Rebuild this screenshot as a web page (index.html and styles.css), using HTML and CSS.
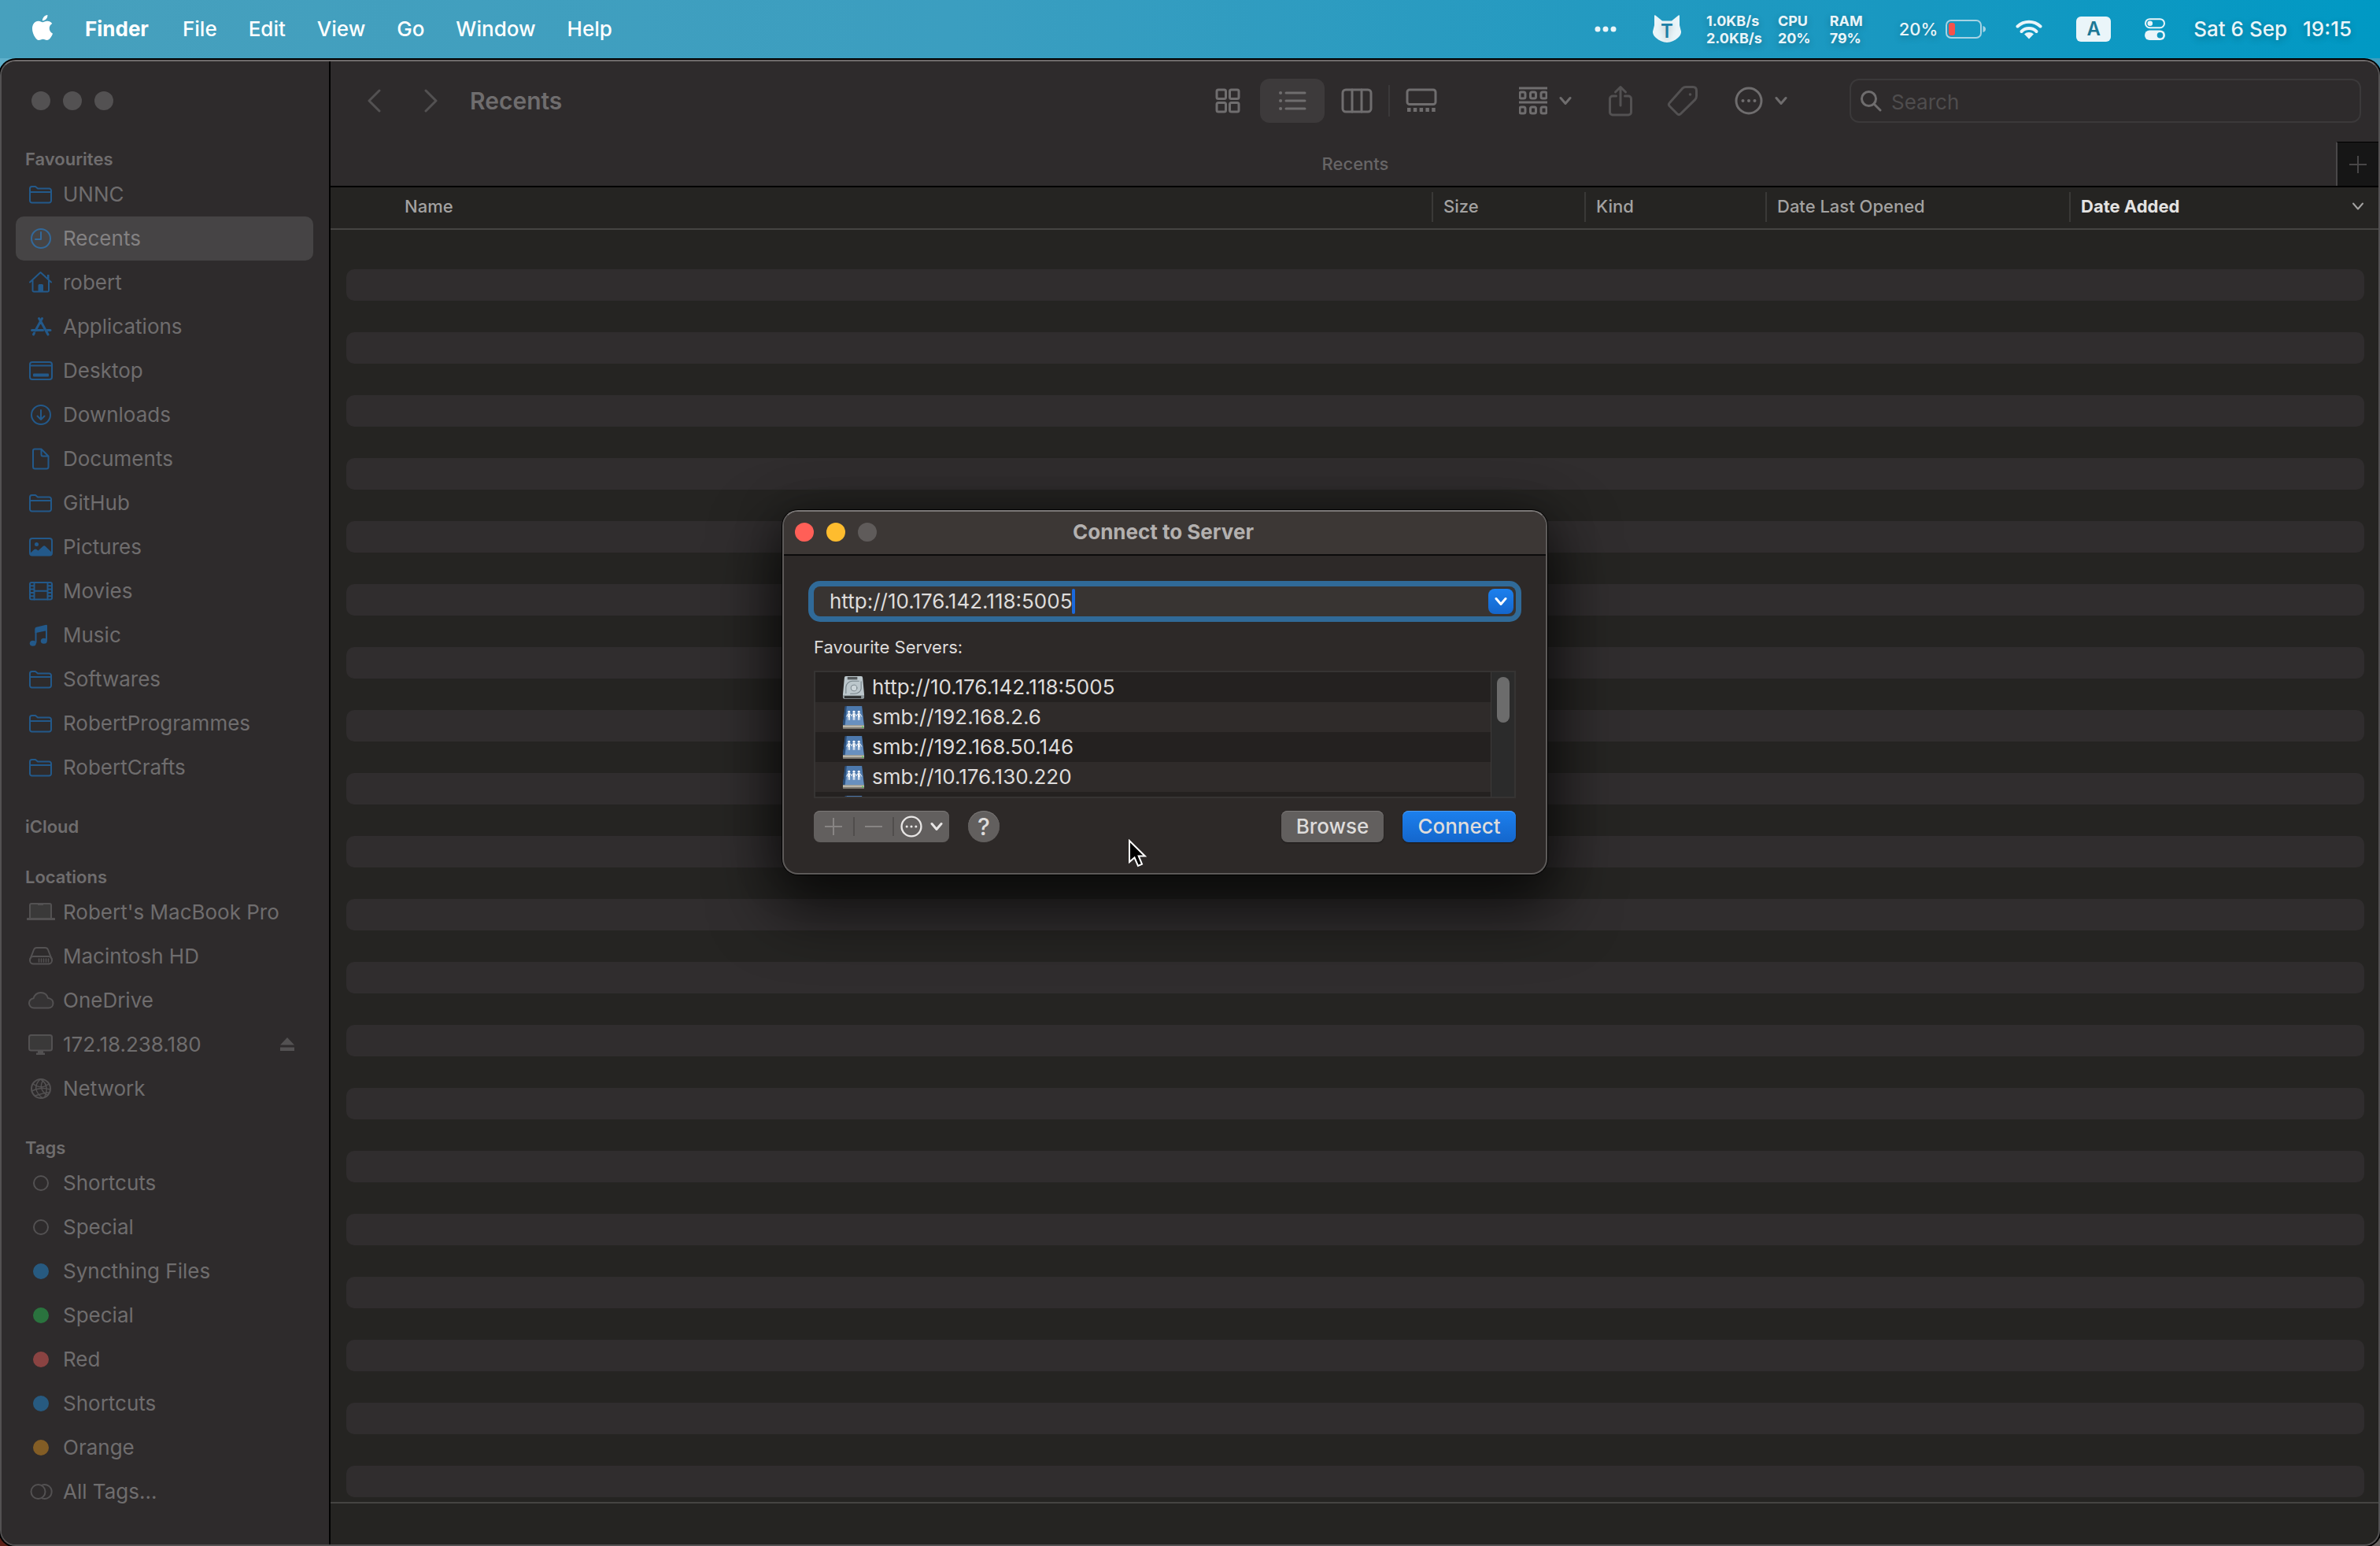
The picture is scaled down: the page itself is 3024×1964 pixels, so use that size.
FILE: index.html
```html
<!DOCTYPE html>
<html lang="en-GB">
<head>
<meta charset="utf-8">
<title>Finder</title>
<link rel="stylesheet" href="styles.css">
</head>
<body>
<svg class="sprite" aria-hidden="true">
  <symbol id="i-folder" viewBox="0 0 36 36"><path d="M4 10.500a2.500 2.500 0 0 1 2.500-2.500h4.500l3 2.500h14.500a2.500 2.500 0 0 1 2.500 2.500v13a2.500 2.500 0 0 1-2.500 2.500h-22a2.500 2.500 0 0 1-2.500-2.500zM4 15h27"/></symbol>
  <symbol id="i-clock" viewBox="0 0 36 36"><circle cx="18" cy="18" r="12"/><path d="M18 10v9h-7"/></symbol>
  <symbol id="i-home" viewBox="0 0 36 36"><path d="M4 17.500 17.500 5 31 17.500M7.500 15.500V28a1.500 1.500 0 0 0 1.500 1.500h17.500a1.500 1.500 0 0 0 1.500-1.500V15.500"/><path class="fill" d="M14.500 29v-7.500a1.500 1.500 0 0 1 1.500-1.500h3.500a1.500 1.500 0 0 1 1.500 1.500V29zM26 8h2.500v6L26 12z"/></symbol>
  <symbol id="i-apps" viewBox="0 0 36 36"><path class="thick" d="M19.500 7.500 11 23M15.500 7.500l3 5 8.500 15.500M6.500 22.500h14M26 22.500h4M9.500 26l-1 2"/></symbol>
  <symbol id="i-desktop" viewBox="0 0 36 36"><rect x="4" y="7" width="28" height="22" rx="3"/><path d="M4 11.500h28"/><rect class="fill" x="8" y="21.500" width="20" height="4" rx="1"/></symbol>
  <symbol id="i-download" viewBox="0 0 36 36"><circle cx="18" cy="18" r="12"/><path d="M18 12v11.500M13.500 19.500l4.500 4.500 4.500-4.500"/></symbol>
  <symbol id="i-doc" viewBox="0 0 36 36"><path d="M8 7.500a2 2 0 0 1 2-2h8.500l9 9V28a2.500 2.500 0 0 1-2.500 2.500H10.500A2.500 2.500 0 0 1 8 28zM18.500 5.500v7a2 2 0 0 0 2 2h7"/></symbol>
  <symbol id="i-picture" viewBox="0 0 36 36"><rect x="4" y="7" width="28" height="21.500" rx="3"/><circle class="fill" cx="12.500" cy="14.500" r="2.500"/><path class="fill" d="M4 26l5.500-5c1-.8 2-.8 3 0l2 1.500 6-5.500c1-1 2.200-1 3.200 0L32 25v1.500l-1.500 2h-25z"/></symbol>
  <symbol id="i-movie" viewBox="0 0 36 36"><rect x="4" y="7" width="28" height="21.500" rx="2"/><path d="M9.500 7v21.500M26.500 7v21.500M9.500 17.800h17M4 11.300h5.500M4 15.600h5.500M4 19.900h5.500M4 24.200h5.500M26.500 11.300h5.500M26.500 15.600h5.500M26.500 19.900h5.500M26.500 24.200h5.500"/></symbol>
  <symbol id="i-music" viewBox="0 0 36 36"><path d="M11.500 27V10.500M25 24V8"/><path class="fill" d="M10.500 9.500c0-1 .5-1.500 1.500-1.800L24.500 4.800c1-.2 1.500.2 1.500 1V12l-15.500 3.200z"/><ellipse class="fill" cx="7.800" cy="28.300" rx="4" ry="3.500"/><ellipse class="fill" cx="21.800" cy="25.300" rx="4" ry="3.500"/></symbol>
  <symbol id="i-laptop" viewBox="0 0 36 36"><path d="M4 26V9a2 2 0 0 1 2-2h23a2 2 0 0 1 2 2v17" fill="#3a3939"/><path class="fill" d="M14 7.500h7v1.500h-7z"/><path class="thick" d="M1 26.500h34"/></symbol>
  <symbol id="i-disk" viewBox="0 0 36 36"><path d="M4.500 21 9 9.500C9.800 7.500 10.500 7 12.500 7h11c2 0 2.700.5 3.500 2.500L31.500 21"/><rect x="4" y="18" width="28" height="9.500" rx="4.500"/><path d="M15.500 21v4M18.500 21v4M21.500 21v4M24.500 21v4M27.500 21v4" stroke-width="1.500"/></symbol>
  <symbol id="i-cloud" viewBox="0 0 36 36"><path d="M9 27.500a6 6 0 0 1-6-6.300c0-3 2.400-5.700 5.600-5.900C10 10.700 13.500 8 17.800 8c4.500 0 8 2.600 9.200 7 3.700.4 6.500 2.900 6.500 6.300 0 3.500-2.500 6.200-6 6.200z" fill="#353334"/></symbol>
  <symbol id="i-display" viewBox="0 0 36 36"><rect x="3" y="6" width="29" height="19.500" rx="2.500" fill="#3a3939"/><path class="fill" d="M14 25.500h7v3h2v2.500H12v-2.500h2z"/></symbol>
  <symbol id="i-globe" viewBox="0 0 36 36"><circle cx="18" cy="18" r="12"/><path d="M17 6C9 14 10 22 20 30M21 6.500c-5 9-3 15 6 20M17 6c8 4 10 12 6 22M8 12c7 5 14 5 20 0M6.500 21c5-3 15-5 23-2M10 27c5-1 12-4 18-4" stroke-width="1.500"/></symbol>
  <symbol id="i-alltags" viewBox="0 0 36 36"><circle cx="14.500" cy="18" r="9"/><path d="M20 9.400a9 9 0 1 1 0 17.200"/></symbol>
  <symbol id="i-chevron" viewBox="0 0 16 12"><path d="M2 2.500l6 7 6-7"/></symbol>
  <symbol id="i-more" viewBox="0 0 36 36"><circle cx="18" cy="18" r="16"/><circle class="fill" cx="10.500" cy="18" r="2"/><circle class="fill" cx="18" cy="18" r="2"/><circle class="fill" cx="25.500" cy="18" r="2"/></symbol>
  <symbol id="i-share-vol" viewBox="0 0 30 32"><path d="M4 1h22l3 25H1z" fill="#4d79ad"/><path d="M4 1h2L3.500 26H1z" fill="#274a74"/><path d="M6 14h21l1.500 12H4z" fill="#7ba0cb" opacity=".6"/><path d="M1 26h28v3.500a1.500 1.500 0 0 1-1.500 1.500h-25A1.500 1.500 0 0 1 1 29.500z" fill="#b9b6ab"/><path d="M1 29h28v1a1 1 0 0 1-1 1H2a1 1 0 0 1-1-1z" fill="#7d7a72"/><circle cx="27" cy="28.500" r="1" fill="#4fd34f"/><g fill="#fff"><circle cx="9" cy="8.500" r="1.600"/><circle cx="15.500" cy="8.500" r="1.600"/><circle cx="22" cy="8.500" r="1.600"/></g><path d="M9 11.500v3M15.500 11.500v3M22 11.500v3" stroke="#fff" stroke-width="2.600"/><path d="M8.200 14v5M9.900 14v5M14.700 14v5M16.400 14v5M21.200 14v5M22.900 14v5M5.800 14.500l2-3.500M10.500 11l1.800 3 1.800-3M17 11l1.800 3 1.800-3M23.500 11l2 3.500" stroke="#fff" stroke-width="1" fill="none"/></symbol>
  <symbol id="i-hdd" viewBox="0 0 30 32"><path d="M5 1h20a2 2 0 0 1 2 2l2 22v4a1.500 1.500 0 0 1-1.500 1.500h-25A1.500 1.500 0 0 1 1 29v-4L3 3a2 2 0 0 1 2-2z" fill="#bcc7cc"/><path d="M1 26h28v3a1.500 1.500 0 0 1-1.500 1.500h-25A1.500 1.500 0 0 1 1 29z" fill="#8d979b"/><path d="M3 27h22v3H3z" fill="#2c2f30"/><path d="M7 2h13v3.500H7z" fill="#54595b"/><path d="M22 7.500h-9a9 8 0 0 0-8 8v8M25 8v9a9 7 0 0 1-9 7h-5" fill="none" stroke="#78858b" stroke-width="1.200"/><circle cx="15.500" cy="16.500" r="4" fill="#cdd6da" stroke="#78858b"/></symbol>
</svg>

<header class="menubar">
  <nav class="menus" aria-label="Menu bar">
    <button class="menu apple" aria-label="Apple"><svg viewBox="0 0 24 24" width="32" height="32"><path fill="#fff" d="M12.152 6.896c-.948 0-2.415-1.078-3.960-1.040-2.040.027-3.910 1.183-4.961 3.014-2.117 3.675-.546 9.103 1.519 12.090 1.013 1.454 2.208 3.090 3.792 3.039 1.520-.065 2.090-.987 3.935-.987 1.831 0 2.350.987 3.960.948 1.637-.026 2.676-1.480 3.676-2.948 1.156-1.688 1.636-3.325 1.662-3.415-.039-.013-3.182-1.221-3.220-4.857-.026-3.040 2.480-4.494 2.597-4.559-1.429-2.090-3.623-2.324-4.390-2.376-2-.156-3.675 1.090-4.610 1.090zM15.530 3.830c.843-1.012 1.400-2.427 1.245-3.830-1.207.052-2.662.805-3.532 1.818-.780.896-1.454 2.338-1.273 3.714 1.338.104 2.715-.688 3.559-1.701"/></svg></button>
    <button class="menu app">Finder</button>
    <button class="menu">File</button>
    <button class="menu">Edit</button>
    <button class="menu">View</button>
    <button class="menu">Go</button>
    <button class="menu">Window</button>
    <button class="menu">Help</button>
  </nav>
  <div class="status">
    <svg class="dots" viewBox="0 0 28 8" width="28" height="8"><g fill="#eaf5f9"><circle cx="4" cy="4" r="3.500"/><circle cx="14" cy="4" r="3.500"/><circle cx="24" cy="4" r="3.500"/></g></svg>
    <svg class="cat" viewBox="0 0 36 36" width="36" height="36"><path fill="#eaf5f9" d="M2 1.500c0-1.500 1-1.500 2-.5l8 6.500h12L32 1c1-1 2-1 2 .5V13l2 8c.3 3-1.500 6-4 8-4 3.500-9 6-14 6s-10-2.500-14-6c-2.500-2-4.300-5-4-8l2-8z"/><text x="18" y="29" text-anchor="middle" font-size="24" font-weight="600" fill="#1c7ea6">T</text></svg>
    <div class="stats">
      <div class="stat">1.0KB/s<br>2.0KB/s</div>
      <div class="stat">CPU<br>20%</div>
      <div class="stat">RAM<br>79%</div>
    </div>
    <div class="battery">20%<svg viewBox="0 0 52 26" width="52" height="26"><rect x="1" y="2" width="44" height="22" rx="6" fill="none" stroke="#a6d3e4" stroke-width="2"/><rect x="4" y="5" width="8" height="16" rx="3" fill="#f5514a"/><path d="M47.500 9c3 1 3.500 2.500 3.500 4s-.5 3-3.500 4z" fill="#a6d3e4"/></svg></div>
    <svg class="wifi" viewBox="0 0 34 26" width="34" height="26"><g fill="none" stroke="#eaf5f9" stroke-width="4"><path d="M2.500 9.500a21 21 0 0 1 29 0"/><path d="M7.500 16a13.500 13.500 0 0 1 19 0"/></g><path fill="#eaf5f9" d="M11 19.300a9 9 0 0 1 12 0L17 25.500z"/></svg>
    <span class="input-source">A</span>
    <svg class="control-centre" viewBox="0 0 26 28" width="26" height="28"><rect x="1" y="1.200" width="24" height="11" rx="5.500" fill="none" stroke="#eaf5f9" stroke-width="2"/><circle cx="6.800" cy="6.700" r="3.300" fill="#eaf5f9"/><rect x="0" y="15.500" width="26" height="12.500" rx="6.200" fill="#eaf5f9"/><circle cx="19.500" cy="21.700" r="3.800" fill="#1095bd"/></svg>
    <time class="clock"><span>Sat 6 Sep</span><span>19:15</span></time>
  </div>
</header>

<main class="window">
  <aside class="sidebar">
    <div class="lights"><i></i><i></i><i></i></div>
    <nav class="places">
      <section>
        <h2>Favourites</h2>
        <ul class="blue">
          <li><a href="#"><svg><use href="#i-folder"/></svg>UNNC</a></li>
          <li><a href="#" class="current"><svg><use href="#i-clock"/></svg>Recents</a></li>
          <li><a href="#"><svg><use href="#i-home"/></svg>robert</a></li>
          <li><a href="#"><svg><use href="#i-apps"/></svg>Applications</a></li>
          <li><a href="#"><svg><use href="#i-desktop"/></svg>Desktop</a></li>
          <li><a href="#"><svg><use href="#i-download"/></svg>Downloads</a></li>
          <li><a href="#"><svg><use href="#i-doc"/></svg>Documents</a></li>
          <li><a href="#"><svg><use href="#i-folder"/></svg>GitHub</a></li>
          <li><a href="#"><svg><use href="#i-picture"/></svg>Pictures</a></li>
          <li><a href="#"><svg><use href="#i-movie"/></svg>Movies</a></li>
          <li><a href="#"><svg><use href="#i-music"/></svg>Music</a></li>
          <li><a href="#"><svg><use href="#i-folder"/></svg>Softwares</a></li>
          <li><a href="#"><svg><use href="#i-folder"/></svg>RobertProgrammes</a></li>
          <li><a href="#"><svg><use href="#i-folder"/></svg>RobertCrafts</a></li>
        </ul>
      </section>
      <section>
        <h2>iCloud</h2>
      </section>
      <section>
        <h2>Locations</h2>
        <ul>
          <li><a href="#"><svg><use href="#i-laptop"/></svg>Robert's MacBook Pro</a></li>
          <li><a href="#"><svg><use href="#i-disk"/></svg>Macintosh HD</a></li>
          <li><a href="#"><svg><use href="#i-cloud"/></svg>OneDrive</a></li>
          <li><a href="#"><svg><use href="#i-display"/></svg>172.18.238.180</a><button class="eject" aria-label="Eject"><svg viewBox="0 0 20 20"><path d="M10 1l9 9.500H1zM1 13.500h18V18H1z" fill="#535152"/></svg></button></li>
          <li><a href="#"><svg><use href="#i-globe"/></svg>Network</a></li>
        </ul>
      </section>
      <section>
        <h2>Tags</h2>
        <ul>
          <li><a href="#"><i class="tag"></i>Shortcuts</a></li>
          <li><a href="#"><i class="tag"></i>Special</a></li>
          <li><a href="#"><i class="tag tag-blue"></i>Syncthing Files</a></li>
          <li><a href="#"><i class="tag tag-green"></i>Special</a></li>
          <li><a href="#"><i class="tag tag-red"></i>Red</a></li>
          <li><a href="#"><i class="tag tag-blue"></i>Shortcuts</a></li>
          <li><a href="#"><i class="tag tag-orange"></i>Orange</a></li>
          <li><a href="#"><svg><use href="#i-alltags"/></svg>All Tags...</a></li>
        </ul>
      </section>
    </nav>
  </aside>

  <div class="content">
    <div class="toolbar">
      <button class="nav" aria-label="Back"><svg viewBox="0 0 18 30" width="18" height="30"><path d="M16 2 3 15l13 13"/></svg></button>
      <button class="nav" aria-label="Forward"><svg viewBox="0 0 18 30" width="18" height="30"><path d="M2 2l13 13L2 28"/></svg></button>
      <h1>Recents</h1>
      <div class="views">
        <button aria-label="Icons"><svg viewBox="0 0 36 36"><rect x="4" y="4" width="11.500" height="11.500" rx="2"/><rect x="20.500" y="4" width="11.500" height="11.500" rx="2"/><rect x="4" y="20.500" width="11.500" height="11.500" rx="2"/><rect x="20.500" y="20.500" width="11.500" height="11.500" rx="2"/></svg></button>
        <button aria-label="List" class="on"><svg viewBox="0 0 36 36"><path d="M10 8h24M10 18h24M10 28h24"/><path class="dot" d="M3 8h.1M3 18h.1M3 28h.1"/></svg></button>
        <button aria-label="Columns"><svg viewBox="0 0 40 36" class="w40"><rect x="2" y="4" width="36" height="28" rx="4"/><path d="M14 4v28M26 4v28"/></svg></button>
        <button aria-label="Gallery" class="ruled"><svg viewBox="0 0 40 36" class="w40"><rect x="2" y="4" width="36" height="18.500" rx="3"/><path d="M2 29.500h36" stroke-width="5" stroke-dasharray="4.500 3.300"/></svg></button>
      </div>
      <button class="tool group" aria-label="Group"><svg viewBox="0 0 36 36"><path d="M0 2h36M0 20h36"/><g><rect x="1" y="7" width="7" height="8" rx="2"/><rect x="14.500" y="7" width="7" height="8" rx="2"/><rect x="28" y="7" width="7" height="8" rx="2"/><rect x="1" y="26" width="7" height="8" rx="2"/><rect x="14.500" y="26" width="7" height="8" rx="2"/><rect x="28" y="26" width="7" height="8" rx="2"/></g></svg><svg class="chev"><use href="#i-chevron"/></svg></button>
      <button class="tool dim share" aria-label="Share" disabled><svg viewBox="0 0 36 40" class="h40"><path d="M12.500 14H8a3.500 3.500 0 0 0-3.500 3.500v17A3.500 3.500 0 0 0 8 38h20a3.500 3.500 0 0 0 3.500-3.500v-17A3.500 3.500 0 0 0 28 14h-4.500M18 26V3M11.500 9 18 2.500 24.500 9"/></svg></button>
      <button class="tool dim tags" aria-label="Tags" disabled><svg viewBox="0 0 40 40" class="w40 h40"><path d="M20 4c1-1 2.300-1.500 4-1.500h9c3 0 4.500 1.500 4.500 4.500v7c0 2-.4 3.200-1.800 4.600L17.500 36.500c-1.500 1.500-3 1.500-4.500 0L3.500 27c-1.500-1.500-1.500-3 0-4.500z"/><circle cx="29.500" cy="12" r="1.800" class="fill"/></svg></button>
      <button class="tool more" aria-label="Actions"><svg><use href="#i-more"/></svg><svg class="chev"><use href="#i-chevron"/></svg></button>
      <label class="search"><svg viewBox="0 0 28 28" width="28" height="28"><circle cx="11.500" cy="11.500" r="9"/><path d="M18 18l8 8"/></svg><input type="search" placeholder="Search" aria-label="Search"></label>
    </div>
    <div class="tabs">
      <span class="tab">Recents</span>
      <button class="new-tab" aria-label="New tab"><svg viewBox="0 0 22 22" width="22" height="22"><path d="M11 0v22M0 11h22"/></svg></button>
    </div>
    <div class="list">
      <table>
        <thead>
          <tr>
            <th class="c-name"><button>Name</button></th>
            <th class="c-size"><button>Size</button></th>
            <th class="c-kind"><button>Kind</button></th>
            <th class="c-opened"><button>Date Last Opened</button></th>
            <th class="c-added" aria-sort="descending"><button>Date Added<svg class="chev"><use href="#i-chevron"/></svg></button></th>
          </tr>
        </thead>
        <tbody>
          <tr><td colspan="5"></td></tr><tr><td colspan="5"></td></tr><tr><td colspan="5"></td></tr><tr><td colspan="5"></td></tr>
          <tr><td colspan="5"></td></tr><tr><td colspan="5"></td></tr><tr><td colspan="5"></td></tr><tr><td colspan="5"></td></tr>
          <tr><td colspan="5"></td></tr><tr><td colspan="5"></td></tr><tr><td colspan="5"></td></tr><tr><td colspan="5"></td></tr>
          <tr><td colspan="5"></td></tr><tr><td colspan="5"></td></tr><tr><td colspan="5"></td></tr><tr><td colspan="5"></td></tr>
          <tr><td colspan="5"></td></tr><tr><td colspan="5"></td></tr><tr><td colspan="5"></td></tr><tr><td colspan="5"></td></tr>
          <tr><td colspan="5"></td></tr><tr><td colspan="5"></td></tr><tr><td colspan="5"></td></tr><tr><td colspan="5"></td></tr>
          <tr><td colspan="5"></td></tr><tr><td colspan="5"></td></tr><tr><td colspan="5"></td></tr><tr><td colspan="5"></td></tr>
          <tr><td colspan="5"></td></tr><tr><td colspan="5"></td></tr><tr><td colspan="5"></td></tr><tr><td colspan="5"></td></tr>
          <tr><td colspan="5"></td></tr><tr><td colspan="5"></td></tr><tr><td colspan="5"></td></tr><tr><td colspan="5"></td></tr>
          <tr><td colspan="5"></td></tr><tr><td colspan="5"></td></tr><tr><td colspan="5"></td></tr><tr><td colspan="5"></td></tr>
        </tbody>
      </table>
    </div>
    <div class="pathbar"></div>
  </div>
</main>

<div class="dialog" role="dialog" aria-labelledby="dialog-title">
  <div class="titlebar">
    <button class="light close" aria-label="Close"></button>
    <button class="light minimise" aria-label="Minimise"></button>
    <button class="light zoom" aria-label="Zoom" disabled></button>
    <h2 id="dialog-title">Connect to Server</h2>
  </div>
  <form class="form">
    <div class="combo">
      <input class="address" type="text" value="http://10.176.142.118:5005" aria-label="Server address"><i class="caret"></i>
      <button type="button" class="drop" aria-label="Recent servers"><svg class="chev"><use href="#i-chevron"/></svg></button>
    </div>
    <p class="caption">Favourite Servers:</p>
    <div class="servers">
      <ul>
        <li><svg><use href="#i-hdd"/></svg>http://10.176.142.118:5005</li>
        <li><svg><use href="#i-share-vol"/></svg>smb://192.168.2.6</li>
        <li><svg><use href="#i-share-vol"/></svg>smb://192.168.50.146</li>
        <li><svg><use href="#i-share-vol"/></svg>smb://10.176.130.220</li>
        <li><svg><use href="#i-share-vol"/></svg></li>
      </ul>
      <div class="track"><i class="thumb"></i></div>
    </div>
    <div class="actions">
      <div class="segments">
        <button type="button" aria-label="Add" disabled><svg viewBox="0 0 22 22" width="22" height="22"><path d="M11 0v22M0 11h22"/></svg></button>
        <button type="button" aria-label="Remove" disabled><svg viewBox="0 0 22 22" width="22" height="22"><path d="M0 11h22"/></svg></button>
        <button type="button" class="wide" aria-label="More"><svg class="dots3" width="28" height="28"><use href="#i-more"/></svg><svg class="chev"><use href="#i-chevron"/></svg></button>
      </div>
      <button type="button" class="help" aria-label="Help">?</button>
      <button type="button" class="push">Browse</button>
      <button type="submit" class="push primary">Connect</button>
    </div>
  </form>
</div>

<svg class="cursor" viewBox="0 0 24 36" width="24" height="36"><path d="M2 2v27l6.500-5.500 4.500 10.500 5-2.200-4.300-10.300h8z" fill="#000" stroke="#fff" stroke-width="2"/></svg>
</body>
</html>
```

FILE: styles.css
```css
* { box-sizing: border-box; }

body {
  margin: 0;
  min-height: 100vh;
  display: flex;
  flex-direction: column;
  position: relative;
  font-family: Inter, "Liberation Sans", sans-serif;
  font-size: 26px;
  line-height: 32px;
  color: #6f6d6e;
  background: linear-gradient(90deg, #5c2018, #6b6462) bottom / 100% 50% no-repeat, linear-gradient(90deg, #5fb0cb, #3f9dbd);
}

button, input { font: inherit; color: inherit; margin: 0; padding: 0; border: 0; background: none; outline: 0; }
h1, h2, p, ul { margin: 0; padding: 0; font: inherit; list-style: none; }
a { color: inherit; text-decoration: none; }
svg { display: block; flex: none; fill: none; stroke-linecap: round; stroke-linejoin: round; }
.sprite { position: absolute; width: 0; height: 0; }
.fill { fill: currentColor; stroke: none; }
.thick { stroke-width: 3; }
.chev { width: 16px; height: 12px; stroke: currentColor; stroke-width: 3; }

/* Menu bar */
.menubar {
  height: 74px;
  display: flex;
  align-items: center;
  justify-content: space-between;
  padding: 0 36px 0 38px;
  color: #fff;
  background: linear-gradient(90deg, #47a0bd, #3b9ec0 40%, #1898c1 80%, #0099c4);
  text-shadow: 0 3px 8px rgba(0, 0, 0, .25);
}
.menus { display: flex; align-items: center; gap: 40px; font-weight: 500; }
.apple { margin-right: -2px; margin-bottom: 4px; }
.app { margin-right: 3px; font-weight: 700; }
.status { display: flex; align-items: center; color: #eaf5f9; font-weight: 500; }
.cat { margin-left: 46px; }
.stats { display: flex; gap: 20px; margin-left: 32px; padding-top: 2px; font-size: 18px; line-height: 22px; font-weight: 700; }
.stats .stat + .stat + .stat { margin-left: 4px; }
.battery { display: flex; align-items: center; gap: 10px; margin-left: 46px; font-size: 22px; }
.wifi { margin-left: 37px; }
.input-source {
  width: 44px; height: 32px; margin-left: 43px; border-radius: 6px;
  background: #eaf5f9; color: #1c7896; font-weight: 600; font-size: 24px; text-align: center; text-shadow: none;
}
.control-centre { margin-left: 43px; }
.clock { display: flex; gap: 20px; margin-left: 36px; }

/* Finder window */
.window {
  flex: 1;
  display: flex;
  border: 2px solid #535152;
  border-top-color: #6f6b6b;
  border-radius: 20px;
  margin-top: 2px;
  overflow: hidden;
  box-shadow: 0 0 0 2px #000;
  background: #252422;
}
.sidebar { width: 418px; flex: none; border-right: 2px solid #000; background: #2e2b2c; }
.lights { display: flex; gap: 16px; padding: 38px 38px 45px; }
.lights i { width: 24px; height: 24px; border-radius: 50%; background: #535152; }
.places { display: flex; flex-direction: column; gap: 30px; padding: 0 20px 0 18px; }
.places h2 { height: 34px; padding-left: 12px; font-size: 22px; font-weight: 600; line-height: 34px; }
.places li { display: flex; align-items: center; position: relative; }
.places a { flex: 1; height: 56px; display: flex; align-items: center; gap: 10px; padding-left: 14px; border-radius: 10px; }
.places a svg { width: 36px; height: 36px; stroke: currentColor; stroke-width: 2; color: #535152; }
.places .blue svg { color: #23598a; }
.places .current { background: #464445; color: #838182; }
.places .blue .current svg { color: #33699a; }
.tag { width: 20px; height: 20px; margin: 0 8px; border-radius: 50%; border: 2px solid #535152; }
.tag-blue { border: 0; background: #275a80; }
.tag-green { border: 0; background: #2a733e; }
.tag-red { border: 0; background: #8a4342; }
.tag-orange { border: 0; background: #835d25; }
.eject { position: absolute; right: 23px; }
.eject svg { width: 20px; height: 20px; }

.content { flex: 1; min-width: 0; display: flex; flex-direction: column; }
.toolbar { height: 102px; display: flex; align-items: center; padding: 0 22px 2px 46px; background: #2e2b2c; }
.toolbar svg { stroke: currentColor; stroke-width: 3; }
.nav { margin-right: 55px; color: #535152; }
.toolbar h1 { margin-left: -15px; font-size: 30px; line-height: 36px; font-weight: 600; }
.views { display: flex; margin-left: auto; }
.views button { width: 82px; height: 56px; display: flex; align-items: center; justify-content: center; border-radius: 12px; position: relative; }
.views .on { background: #3d3a3b; }
.views svg { width: 36px; height: 36px; }
.toolbar .w40 { width: 40px; }
.toolbar .dot { stroke-width: 4; }
.views .ruled::before { content: ""; position: absolute; left: -1px; top: 8px; width: 2px; height: 40px; background: #3b393a; }
.views .ruled path { stroke-linecap: butt; }
.tool { display: flex; align-items: center; gap: 15px; }
.tool svg { width: 36px; height: 36px; }
.toolbar .h40 { height: 40px; }
.tool .chev { width: 16px; height: 12px; }
.dim { color: #535152; }
.group { margin-left: 83px; }
.share { margin-left: 44px; }
.tags { margin-left: 41px; }
.more { margin-left: 46px; }
.search { width: 650px; height: 56px; display: flex; align-items: center; gap: 12px; margin-left: 79px; padding-left: 11px; border: 2px solid #3b393a; border-radius: 12px; }
.search input { flex: 1; min-width: 0; padding-top: 4px; appearance: none; }
.search input::placeholder { color: #4f4d4e; opacity: 1; }

.tabs { height: 56px; display: flex; background: #2e2b2c; font-size: 22px; font-weight: 500; }
.tab { flex: 1; padding-left: 56px; line-height: 56px; text-align: center; color: #676566; }
.new-tab { width: 54px; display: flex; align-items: center; justify-content: center; border-left: 2px solid #4a4849; border-top: 1px solid #000; background: #161616; }
.new-tab svg { stroke: #484647; stroke-width: 2; }

.list { padding: 0 18px 6px 20px; border-top: 2px solid #000; background: linear-gradient(#454442, #454442) 0 52px / 100% 2px no-repeat; }
table { width: 100%; table-layout: fixed; border-collapse: separate; border-spacing: 0; }
th { height: 64px; padding: 6px 0 20px; vertical-align: top; font-size: 22px; font-weight: 500; color: #a3a2a1; }
th button { width: 100%; height: 38px; display: flex; align-items: center; justify-content: space-between; padding: 0 0 2px 13px; border-left: 2px solid #3a3937; }
.c-name button { padding-left: 72px; border-color: transparent; }
.c-size { width: 194px; }
.c-kind { width: 230px; }
.c-opened { width: 386px; }
.c-added { width: 375px; font-weight: 700; color: #e4e3e2; }
th .chev { stroke-width: 2; color: #a3a2a1; }
td { height: 40px; padding: 0; }
tbody tr:nth-child(even) td { background: #302d2e; border-radius: 10px; }
.pathbar { flex: 1; min-height: 54px; border-top: 2px solid #454442; }

/* Connect to Server */
.dialog {
  position: absolute; left: 994px; top: 648px; width: 972px;
  border: 2px solid #5d5a59; border-top-color: #7b7877; border-radius: 20px;
  background: #2d2928; color: #dedcdb; overflow: clip;
  box-shadow: 0 0 0 1px #000, 0 36px 80px 10px rgba(0, 0, 0, .65), 0 0 60px rgba(0, 0, 0, .3);
}
.titlebar { height: 56px; display: flex; align-items: center; gap: 16px; padding: 0 14px 2px; border-bottom: 2px solid #0c0b0b; background: #3c3735; }
.titlebar h2 { flex: 1; padding-right: 124px; text-align: center; font-weight: 700; color: #b3b0af; }
.light { width: 24px; height: 24px; border-radius: 50%; }
.close { background: #ff5f57; }
.minimise { background: #febc2e; }
.zoom { background: #5f5b5a; }
.form { padding: 39px 38px; }
.combo {
  height: 38px; display: flex; align-items: center; padding: 0 3px 0 20px;
  border-radius: 8px; background: #383432; box-shadow: 0 0 0 7px #306a98;
}
.address { field-sizing: content; }
.caret { width: 4px; height: 32px; background: #1a69dd; border-radius: 2px; }
.drop { width: 32px; height: 32px; display: flex; align-items: center; justify-content: center; margin-left: auto; border-radius: 8px; background: linear-gradient(#1c80ee, #1466cc); color: #fff; }
.caption { margin: 23px 0 14px; font-size: 22px; }
.servers { height: 162px; display: flex; border: 2px solid #363433; overflow: hidden; background: #242120; }
.servers ul { flex: 1; }
.servers li { height: 38px; display: flex; align-items: center; gap: 9px; padding-left: 34px; }
.servers li:nth-child(even) { background: #2f2b2a; }
.servers li svg { width: 29px; height: 31px; }
.track { width: 30px; padding: 6px 7px; border-left: 1px solid #3d3b3a; background: #2b2b2b; }
.thumb { display: block; width: 16px; height: 58px; border-radius: 8px; background: #6c6c6c; }
.actions { display: flex; align-items: center; margin-top: 16px; font-weight: 500; }
.segments { width: 172px; height: 40px; display: flex; align-items: center; border-radius: 8px; background: #625f5e; box-shadow: inset 0 1px #7b7877; }
.segments button { width: 50px; height: 24px; display: flex; align-items: center; justify-content: center; gap: 10px; }
.segments button + button { border-left: 2px solid #504d4c; }
.segments svg { stroke: #878483; stroke-width: 2; }
.segments .wide { flex: 1; color: #e8e6e5; }
.segments .wide svg { stroke: currentColor; stroke-width: 3; }
.help { width: 40px; height: 40px; margin: 0 auto 0 24px; border-radius: 50%; background: #625f5e; font-size: 30px; box-shadow: inset 0 1px #7b7877; }
.push { width: 130px; height: 40px; border-radius: 8px; background: #625f5e; box-shadow: inset 0 1px #7b7877, 0 1px 2px rgba(0, 0, 0, .4); }
.primary { width: 144px; margin-left: 24px; background: linear-gradient(#1c80ee, #1466cc); box-shadow: inset 0 1px #4a9bf2, 0 1px 2px rgba(0, 0, 0, .4); }

.cursor { position: absolute; left: 1433px; top: 1066px; stroke-linejoin: miter; }
```
